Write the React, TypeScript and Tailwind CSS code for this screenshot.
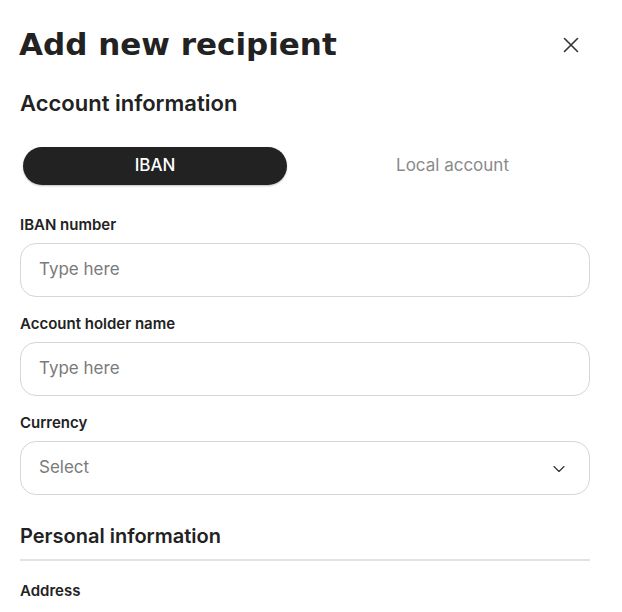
import { ChevronDown } from "lucide-react";

function Label({ children }: { children: string }) {
  return <label className="block text-[15px] font-semibold leading-[20px] text-[#222]">{children}</label>;
}

function Field({ label, placeholder }: { label: string; placeholder: string }) {
  return (
    <div className="mt-[17px]">
      <Label>{label}</Label>
      <div className="mt-[8px] h-[54px] rounded-[16px] border border-[#d6d6d6] flex items-center px-[18px]">
        <span className="text-[17px] text-[#7a7a7a]">{placeholder}</span>
      </div>
    </div>
  );
}

export default function App() {
  return (
    <div className="w-[622px] h-[612px] bg-white overflow-hidden font-['Inter',sans-serif] text-[#222]">
      <div className="ml-[20px] pt-[24px] w-[570px]">
        <div className="flex items-center justify-between h-[40px]">
          <h1 className="font-['DejaVu_Sans',sans-serif] text-[31px] font-bold leading-[40px] text-[#222] -ml-[1px]">
            Add new recipient
          </h1>
          <svg width="16" height="16" viewBox="0 0 16 16" className="mr-[11px] mt-[2px]" fill="none" stroke="#333" strokeWidth="1.6" strokeLinecap="round">
            <path d="M1.5 1.5 L14.5 14.5 M14.5 1.5 L1.5 14.5" />
          </svg>
        </div>

        <h2 className="mt-[25px] text-[22px] font-semibold leading-[28px]">Account information</h2>

        <div className="mt-[30px] flex items-center gap-[33px] pl-[3px]">
          <div className="w-[264px] h-[38px] rounded-full bg-[#222] shadow-[0_1px_2px_rgba(0,0,0,0.25)] flex items-center justify-center text-white text-[17px] font-medium">
            IBAN
          </div>
          <div className="w-[265px] h-[38px] flex items-center justify-center text-[#8a8a8a] text-[17px]">
            Local account
          </div>
        </div>

        <div className="pt-[13px]">
          <Field label="IBAN number" placeholder="Type here" />
          <Field label="Account holder name" placeholder="Type here" />

          <div className="mt-[17px]">
            <Label>Currency</Label>
            <div className="mt-[8px] h-[54px] rounded-[16px] border border-[#d6d6d6] flex items-center justify-between px-[18px]">
              <span className="text-[17px] text-[#7a7a7a]">Select</span>
              <ChevronDown size={20} strokeWidth={1.4} className="text-[#333] mr-[2px] mt-[2px]" />
            </div>
          </div>

          <h2 className="mt-[28px] text-[20px] font-semibold leading-[26px]">Personal information</h2>
          <div className="mt-[10px] h-[2px] bg-[#e2e2e2]" />
          <div className="mt-[20px]">
            <Label>Address</Label>
          </div>
        </div>
      </div>
    </div>
  );
}
